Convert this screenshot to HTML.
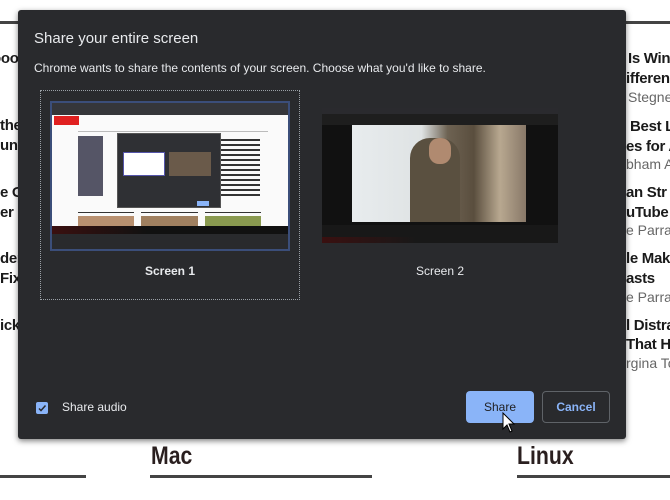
<!DOCTYPE html>
<html><head><meta charset="utf-8"><style>
*{margin:0;padding:0;box-sizing:border-box}
body{width:670px;height:500px;background:#fff;position:relative;overflow:hidden;font-family:"Liberation Sans",sans-serif}
.bt{position:absolute;font-weight:bold;font-size:15px;color:#1a1a1a;white-space:nowrap;letter-spacing:-0.3px}
.au{position:absolute;font-size:14px;color:#666;white-space:nowrap}
.hl{position:absolute;height:3px;background:#444}
.big{position:absolute;font-weight:bold;font-size:25px;color:#2a1f1f;transform:scaleX(.85);transform-origin:left}
#dlg{position:absolute;left:18px;top:10px;width:608px;height:429px;background:#292a2d;border-radius:3px;box-shadow:0 2px 6px rgba(0,0,0,.5);color:#e8eaed}
.abs{position:absolute}
</style></head><body>
<div class="hl" style="left:0;top:21px;width:20px"></div>
<div class="hl" style="left:625px;top:21px;width:45px"></div>
<div class="bt" style="left:-8px;top:50px">ooo</div>
<div class="bt" style="left:0;top:117px">the</div>
<div class="bt" style="left:0;top:137px">unt</div>
<div class="bt" style="left:0;top:184px">e O</div>
<div class="bt" style="left:0;top:204px">er</div>
<div class="bt" style="left:0;top:250px">der</div>
<div class="bt" style="left:0;top:270px">Fix</div>
<div class="bt" style="left:0;top:317px">ick</div>

<div class="bt" style="left:628px;top:50px">Is Win</div>
<div class="bt" style="left:626px;top:70px">ifferen</div>
<div class="au" style="left:628px;top:89px">Stegne</div>
<div class="bt" style="left:630px;top:118px">Best L</div>
<div class="bt" style="left:626px;top:138px">es for A</div>
<div class="au" style="left:626px;top:156px">bham A,</div>
<div class="bt" style="left:626px;top:184px">an Str</div>
<div class="bt" style="left:626px;top:204px">uTube</div>
<div class="au" style="left:626px;top:222px">e Parrac</div>
<div class="bt" style="left:626px;top:250px">le Mak</div>
<div class="bt" style="left:626px;top:270px">asts</div>
<div class="au" style="left:626px;top:289px">e Parrac</div>
<div class="bt" style="left:626px;top:317px">l Distra</div>
<div class="bt" style="left:626px;top:336px">That H</div>
<div class="au" style="left:626px;top:355px">rgina To</div>

<div class="big" style="left:151px;top:442px">Mac</div>
<div class="big" style="left:517px;top:442px">Linux</div>
<div class="hl" style="left:0;top:475px;width:86px"></div>
<div class="hl" style="left:150px;top:475px;width:222px"></div>
<div class="hl" style="left:517px;top:475px;width:153px"></div>

<div id="dlg">
 <div class="abs" style="left:16px;top:20px;font-size:15px;color:#e8eaed">Share your entire screen</div>
 <div class="abs" style="left:16px;top:51px;font-size:12px;color:#e8eaed">Chrome wants to share the contents of your screen. Choose what you'd like to share.</div>
 <div class="abs" style="left:22px;top:80px;width:260px;height:210px;border:1px dotted #9aa0a6"></div>
 <div class="abs" style="left:32px;top:91px;width:240px;height:150px;border:2px solid #3b4e7a;background:#fafafa;overflow:hidden">
  <div class="abs" style="left:0;top:0;width:236px;height:12px;background:#35363a"></div>
  <div class="abs" style="left:2px;top:13px;width:25px;height:9px;background:#e02020"></div>
  <div class="abs" style="left:26px;top:28px;width:190px;height:1px;background:#bbb"></div>
  <div class="abs" style="left:26px;top:33px;width:25px;height:60px;background:#556"></div>
  <div class="abs" style="left:168px;top:33px;width:40px;height:60px;background:repeating-linear-gradient(#fafafa 0 3px,#333 3px 5px)"></div>
  <div class="abs" style="left:65px;top:30px;width:104px;height:75px;background:#2f3034;border:1px solid #555"></div>
  <div class="abs" style="left:71px;top:49px;width:42px;height:24px;background:#fff;border:1px solid #55a"></div>
  <div class="abs" style="left:117px;top:49px;width:42px;height:24px;background:#6a5a4a"></div>
  <div class="abs" style="left:145px;top:98px;width:12px;height:5px;background:#8ab4f8"></div>
  <div class="abs" style="left:26px;top:109px;width:56px;height:1px;background:#333"></div>
  <div class="abs" style="left:89px;top:109px;width:57px;height:1px;background:#333"></div>
  <div class="abs" style="left:153px;top:109px;width:56px;height:1px;background:#333"></div>
  <div class="abs" style="left:26px;top:113px;width:56px;height:10px;background:#b89070"></div>
  <div class="abs" style="left:89px;top:113px;width:57px;height:10px;background:#a08060"></div>
  <div class="abs" style="left:153px;top:113px;width:56px;height:10px;background:#8a9a50"></div>
  <div class="abs" style="left:0;top:123px;width:236px;height:8px;background:linear-gradient(90deg,#3a1010,#111 40%,#111)"></div>
  <div class="abs" style="left:0;top:131px;width:236px;height:15px;background:#292a2d"></div>
 </div>
 <div class="abs" style="left:32px;top:254px;width:240px;text-align:center;font-size:12px;font-weight:bold;color:#e8eaed">Screen 1</div>
 <div class="abs" style="left:304px;top:98px;width:236px;height:135px;background:#111;overflow:hidden">
  <div class="abs" style="left:0;top:0;width:236px;height:6px;background:#2a2a2e"></div>
  <div class="abs" style="left:0;top:6px;width:236px;height:11px;background:#1e1e1e"></div>
  <div class="abs" style="left:30px;top:17px;width:174px;height:97px;background:linear-gradient(90deg,#e8ecee 0%,#dfe3e4 40%,#6d6252 55%,#5a4e3e 70%,#b8a890 85%,#887868 100%)"></div>
  <div class="abs" style="left:88px;top:30px;width:50px;height:84px;background:#5a5040;border-radius:20px 20px 0 0"></div>
  <div class="abs" style="left:107px;top:30px;width:22px;height:26px;background:#b08a70;border-radius:10px"></div>
  <div class="abs" style="left:0;top:117px;width:236px;height:12px;background:#181818"></div>
  <div class="abs" style="left:0;top:129px;width:236px;height:6px;background:linear-gradient(90deg,#3a1010,#181818 40%)"></div>
 </div>
 <div class="abs" style="left:304px;top:254px;width:236px;text-align:center;font-size:12px;color:#e8eaed">Screen 2</div>
 <div class="abs" style="left:18px;top:392px;width:12px;height:12px;background:#8ab4f8;border-radius:2px"></div>
 <svg class="abs" style="left:18px;top:392px" width="12" height="12"><path d="M3 6.5 L5 8.5 L9.5 3.5" stroke="#292a2d" stroke-width="1.5" fill="none"/></svg>
 <div class="abs" style="left:44px;top:390px;font-size:12px;color:#e8eaed">Share audio</div>
 <div class="abs" style="left:448px;top:381px;width:68px;height:32px;background:#8ab4f8;border-radius:4px;color:#202124;font-size:12px;text-align:center;line-height:32px">Share</div>
 <div class="abs" style="left:524px;top:381px;width:68px;height:32px;border:1px solid #5f6368;border-radius:4px;color:#8ab4f8;font-size:12px;font-weight:bold;text-align:center;line-height:30px">Cancel</div>
 <svg class="abs" style="left:484px;top:402px" width="14" height="22"><path d="M1 1 L1 17 L5 13 L8 20 L10 19 L7 12 L12 12 Z" fill="#fff" stroke="#000" stroke-width="1"/></svg>
</div>
</body></html>
